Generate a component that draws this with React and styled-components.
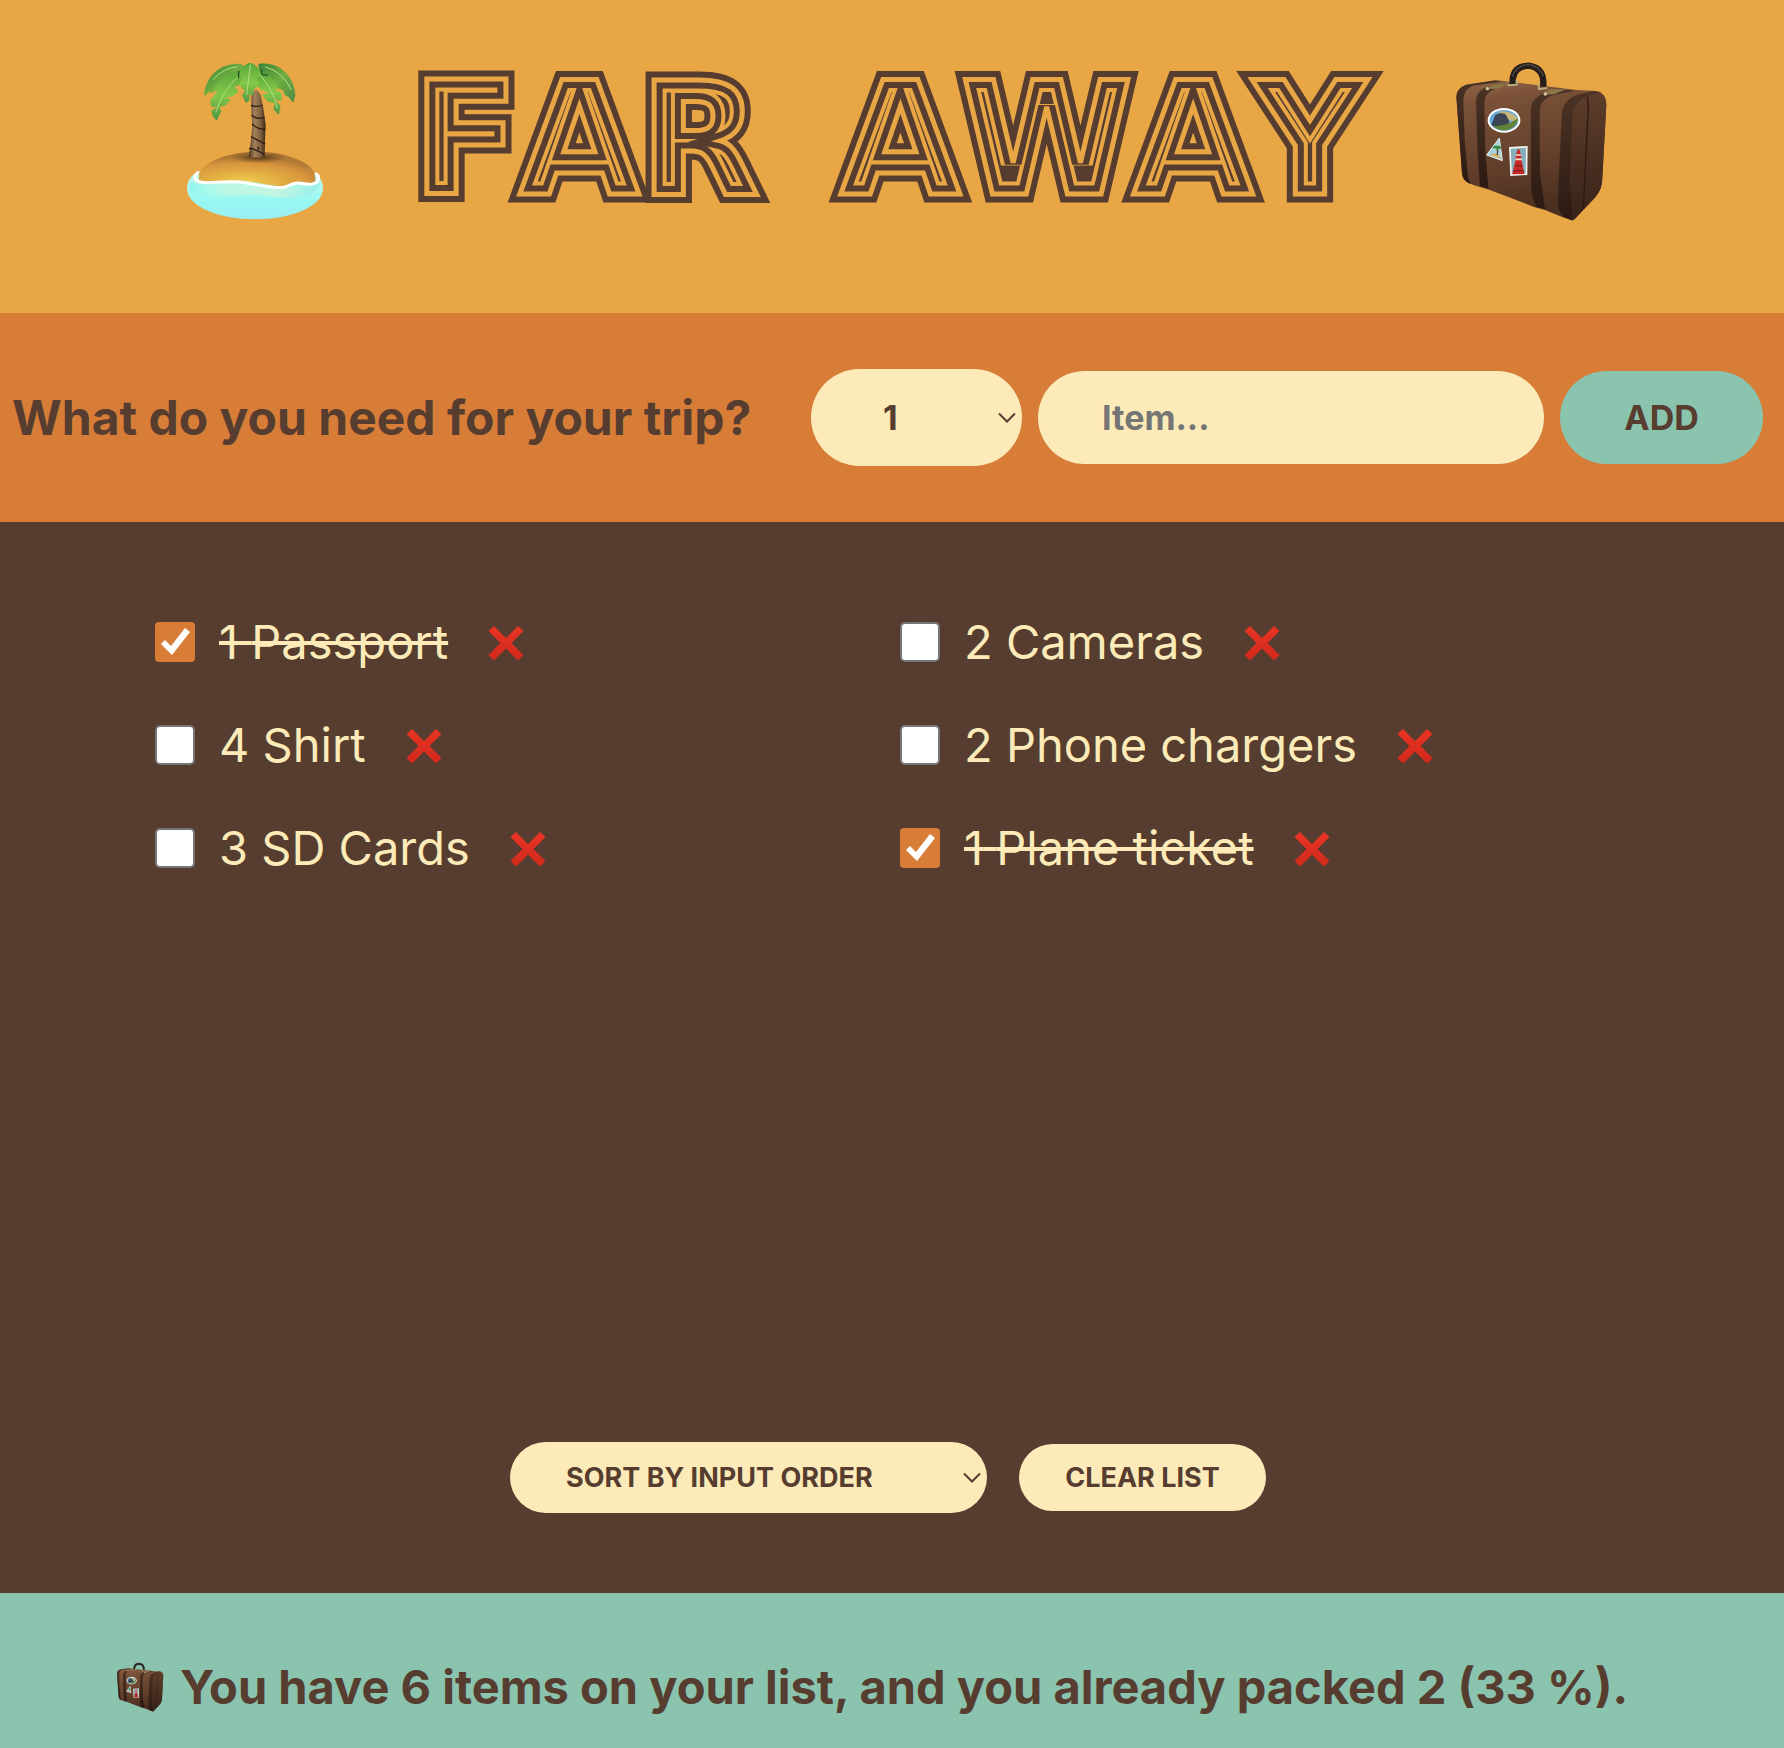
import React, { useState } from "react";
import styled, { createGlobalStyle } from "styled-components";

const color = {
  sun: "#e8a645",
  orange: "#d77d38",
  brown: "#563d2f",
  cream: "#fcebb8",
  mint: "#8ac4af",
};

const GlobalStyle = createGlobalStyle`
  * { box-sizing: border-box; margin: 0; padding: 0; }
  body, button, input, select {
    font-family: Inter, "Liberation Sans", sans-serif;
    color: ${color.brown};
  }
`;

const Page = styled.div`
  min-height: 100vh;
  display: grid;
  grid-template-rows: auto auto 1fr auto;
`;

const Header = styled.header`
  display: flex;
  align-items: flex-start;
  justify-content: space-between;
  padding: 60px 176px 91px 185px;
  background: ${color.sun};
`;

const Title = styled.h1`
  display: flex;
  gap: 80px;
  font-family: "DejaVu Sans", Inter, sans-serif;
  font-size: 156px;
  line-height: 160px;
  font-weight: 700;
  font-kerning: none;
  text-transform: uppercase;
  white-space: nowrap;
`;

const Word = styled.span`
  position: relative;
  color: ${color.brown};
  -webkit-text-stroke: 25px ${color.sun};

  &::before,
  &::after {
    content: "${(p) => p.children}";
    position: absolute;
    inset: 0;
    color: transparent;
  }
  &::before { -webkit-text-stroke: 17px ${color.brown}; }
  &::after { -webkit-text-stroke: 5px ${color.sun}; }
`;

const Form = styled.form`
  display: flex;
  align-items: center;
  gap: 16px;
  padding: 56px 21px 56px 12px;
  background: ${color.orange};
`;

const Question = styled.h2`
  flex: 1;
  font-size: 48px;
  line-height: 60px;
  font-weight: 700;
  white-space: nowrap;
`;

const SelectBox = styled.div`
  position: relative;
  width: ${(p) => p.$width}px;
`;

const Select = styled.select`
  appearance: none;
  display: block;
  width: 100%;
  height: ${(p) => (p.$small ? 71 : 97)}px;
  padding-left: ${(p) => (p.$small ? 56 : 72)}px;
  border: 0;
  border-radius: 50px;
  background: ${color.cream};
  font-size: ${(p) => (p.$small ? 27 : 34)}px;
  font-weight: 700;
  text-transform: uppercase;
`;

const Chevron = styled.svg`
  position: absolute;
  right: 6px;
  top: 50%;
  margin-top: -6px;
  pointer-events: none;
`;

const ItemInput = styled.input`
  width: 506px;
  height: 93px;
  padding: 0 64px;
  border: 0;
  border-radius: 50px;
  background: ${color.cream};
  font-size: 34px;
  font-weight: 700;
  &::placeholder { color: #757575; opacity: 1; }
`;

const Button = styled.button`
  height: ${(p) => (p.$small ? 67 : 93)}px;
  width: ${(p) => (p.$small ? 247 : 203)}px;
  border: 0;
  border-radius: 50px;
  background: ${(p) => (p.$small ? color.cream : color.mint)};
  font-size: ${(p) => (p.$small ? 27 : 34)}px;
  font-weight: 700;
  text-transform: uppercase;
  cursor: pointer;
`;

const Main = styled.main`
  display: flex;
  flex-direction: column;
  justify-content: space-between;
  padding: 90px 0 80px;
  background: ${color.brown};
`;

const List = styled.ul`
  display: grid;
  grid-template-columns: 1fr 1fr;
  gap: 43px 24px;
  padding: 0 163px 0 155px;
  list-style: none;
`;

const Item = styled.li`
  display: flex;
  align-items: center;
  height: 60px;
`;

const ItemLabel = styled.label`
  display: flex;
  align-items: center;
  gap: 24px;
  font-size: 47px;
  line-height: 60px;
  color: ${color.cream};
`;

const ItemText = styled.span`
  text-decoration: ${(p) => (p.$packed ? "line-through" : "none")};
`;

const Check = styled.input`
  appearance: none;
  width: 40px;
  height: 40px;
  border: 2px solid #767676;
  border-radius: 5px;
  background: #fff;
  &:checked { border: 0; border-radius: 4px; background: ${color.orange}; }
  &:checked::before {
    content: "";
    display: block;
    width: 40px;
    height: 40px;
    background: #fff;
    clip-path: polygon(6px 22px, 10px 18px, 16px 24px, 30px 6px, 35px 10px, 17px 33px);
  }
`;

const Remove = styled.button`
  display: flex;
  margin: 2px 0 0 40px;
  border: 0;
  background: none;
  cursor: pointer;
`;

const Actions = styled.div`
  display: flex;
  align-items: center;
  justify-content: center;
  gap: 32px;
  padding-right: 8px;
`;

const Stats = styled.footer`
  display: flex;
  align-items: center;
  justify-content: center;
  gap: 16px;
  padding: 64px 40px 31px 0;
  background: ${color.mint};
  font-size: 47px;
  line-height: 60px;
  font-weight: 700;
`;

function Arrow() {
  return (
    <Chevron width="18" height="12" viewBox="0 0 18 12" fill="none" stroke={color.brown} strokeWidth="2">
      <path d="M1 1.5 9 9.5 17 1.5" />
    </Chevron>
  );
}

function Cross() {
  return (
    <svg width="36" height="36" viewBox="0 0 36 36" aria-hidden="true">
      <defs>
        <linearGradient id="cross" x1="0" y1="0" x2="0" y2="1">
          <stop offset="0" stopColor="#e93424" />
          <stop offset="1" stopColor="#d1291c" />
        </linearGradient>
      </defs>
      <path fill="url(#cross)" d="M6 1 18 13 30 1 35.500 6 23.500 18 35.500 30 30 35.500 18 23.500 6 35.500 .5 30 12.500 18 .5 6Z" />
    </svg>
  );
}

function Island() {
  return (
    <svg width="140" height="162" viewBox="105 60 420 486" aria-hidden="true">
      <defs>
        <linearGradient id="sea" x1="0" y1="0" x2="0" y2="1">
          <stop offset="0" stopColor="#c8f6e4" />
          <stop offset=".6" stopColor="#98f8f2" />
          <stop offset="1" stopColor="#9aeef4" />
        </linearGradient>
        <linearGradient id="shallow" x1="0" y1="0" x2="1" y2="0">
          <stop offset="0" stopColor="#7df6f4" stopOpacity=".9" />
          <stop offset=".3" stopColor="#d8f8d8" stopOpacity=".6" />
          <stop offset=".65" stopColor="#e9f3cf" stopOpacity=".8" />
          <stop offset="1" stopColor="#7fe9ef" stopOpacity=".9" />
        </linearGradient>
        <radialGradient id="sand" cx=".38" cy=".9" r=".75">
          <stop offset="0" stopColor="#f0cf50" />
          <stop offset=".45" stopColor="#e2ac42" />
          <stop offset=".75" stopColor="#d8953e" />
          <stop offset="1" stopColor="#b07a35" />
        </radialGradient>
        <radialGradient id="shade">
          <stop offset="0" stopColor="#3f2a12" stopOpacity=".9" />
          <stop offset="1" stopColor="#6b4a20" stopOpacity="0" />
        </radialGradient>
        <linearGradient id="trunk" x1="0" y1="0" x2="1" y2="0">
          <stop offset="0" stopColor="#4b3220" />
          <stop offset=".35" stopColor="#a3805a" />
          <stop offset=".7" stopColor="#80603f" />
          <stop offset="1" stopColor="#3c2718" />
        </linearGradient>
        <linearGradient id="leafDark" x1="0" y1="0" x2="1" y2="1">
          <stop offset="0" stopColor="#3b8238" />
          <stop offset=".5" stopColor="#6fae40" />
          <stop offset="1" stopColor="#4d8a45" />
        </linearGradient>
        <linearGradient id="leafLight" x1="0" y1="0" x2="0" y2="1">
          <stop offset="0" stopColor="#59a53a" />
          <stop offset=".5" stopColor="#84c94a" />
          <stop offset="1" stopColor="#4f9544" />
        </linearGradient>
      </defs>
      <path d="M147 394C122 406 111 424 111 445 111 500 205 538 315 538S519 500 519 445C519 424 510 410 488 400Z" fill="url(#sea)" />
      <path d="M120 425C180 440 250 425 310 440 380 460 430 435 510 432 490 470 440 480 370 470 280 450 170 490 118 455Z" fill="url(#shallow)" opacity=".6" />
      <path d="M147 400C170 360 240 335 320 335S480 362 495 402L496 424C480 436 450 426 432 430 410 436 415 442 382 438 330 433 290 418 240 422 200 426 172 432 147 420Z" fill="url(#sand)" />
      <path d="M143 398C130 408 134 422 150 426 180 434 230 418 290 429 335 438 370 446 400 442 420 439 425 426 448 429 480 434 498 436 504 420 507 410 503 404 498 402" fill="none" stroke="#fff" strokeWidth="9" strokeLinecap="round" />
      <ellipse cx="325" cy="352" rx="90" ry="18" fill="url(#shade)" />
      <path d="M304 165Q316 135 332 165L340 205 347 255 345 300 344 351Q320 356 296 350L302 310 307 255 304 205Z" fill="url(#trunk)" />
      <path d="M303 196Q320 203 338 195M304 226Q322 240 344 232M306 251Q324 270 346 267M303 290Q322 300 346 312M297 325Q315 326 343 343M325 320V330" fill="none" stroke="#2d1c12" strokeWidth="4" />
      <path d="M275 72C210 66 166 110 162 169L178 156 188 158 204 138 216 142 240 122 256 124 290 100Z" fill="url(#leafDark)" />
      <path d="M325 72C390 62 432 110 436 165L430 188 416 172 406 166 398 150 382 144 362 126 330 112Z" fill="url(#leafDark)" />
      <path d="M275 90C225 100 196 130 190 154L202 154 180 182 184 202 202 200 184 212 188 228 200 242 214 214 208 202 228 196 244 178 226 174 250 168 266 154 254 142 280 128Z" fill="url(#leafLight)" />
      <path d="M318 92C355 98 380 125 388 146L372 146 394 158 395 182 376 180 392 198 386 224 370 208 374 190 352 184 336 164 356 158 330 148 316 128Z" fill="url(#leafLight)" />
      <path d="M300 68C275 75 266 95 265 116L276 112 268 136 284 152 276 166 288 190 299 180 298 162 308 168 312 148 328 136 322 112 334 104C330 85 315 72 300 68Z" fill="url(#leafLight)" />
      <path d="M302 74Q296 110 290 165M262 112Q220 150 198 215M330 105Q370 150 382 205M190 118Q220 84 262 80M345 80Q400 96 424 150" fill="none" stroke="#b4e084" strokeWidth="3" />
      <path d="M266 92 266 114M334 88 336 104 354 106" stroke="#234f26" strokeWidth="4" fill="none" />
    </svg>
  );
}

function Suitcase({ width, height, name }) {
  const id = (part) => `${name}-${part}`;
  const fill = (part) => `url(#${id(part)})`;
  return (
    <svg width={width} height={height} viewBox="72 60 462 486" aria-hidden="true">
      <defs>
        <linearGradient id={id("front")} x1="0" y1="0" x2=".2" y2="1">
          <stop offset="0" stopColor="#94694a" />
          <stop offset=".18" stopColor="#7a5138" />
          <stop offset=".6" stopColor="#65412c" />
          <stop offset="1" stopColor="#4a2e1f" />
        </linearGradient>
        <linearGradient id={id("side")} x1="0" y1="0" x2="0" y2="1">
          <stop offset="0" stopColor="#5e3e2b" />
          <stop offset="1" stopColor="#382219" />
        </linearGradient>
        <linearGradient id={id("strap")} x1="0" y1="0" x2="0" y2="1">
          <stop offset="0" stopColor="#4c3325" />
          <stop offset="1" stopColor="#2b1a12" />
        </linearGradient>
      </defs>
      <path d="M79 170Q80 145 108 134L205 121 440 150 500 153Q529 160 529 195L516 430Q510 460 488 480L432 540 395 530 345 510 310 500 180 450 130 435Q98 425 96 400Z" fill={fill("front")} />
      <path d="M424 225Q430 170 480 155L505 156Q529 163 529 195L516 430Q510 460 488 480L430 540 418 530Z" fill={fill("side")} />
      <path d="M472 165 475 200 460 505" stroke="#2b1a13" strokeWidth="4" fill="none" />
      <path d="M79 170Q80 145 108 134L195 121 215 125 130 137Q102 145 100 180L104 300 114 410 122 432Q98 425 96 400Z" fill={fill("strap")} />
      <path d="M138 180Q140 155 165 143L225 130 200 145Q164 155 163 190L166 330 175 445 150 438 143 340Z" fill={fill("strap")} />
      <path d="M302 205Q306 172 345 158L390 146 435 152 370 165Q330 178 329 215L330 400 345 508 318 500 304 460Z" fill={fill("strap")} />
      <path d="M396 215Q402 180 440 165L490 153 515 157Q440 168 428 220L420 420 428 542 400 532 384 505 386 420Z" fill={fill("strap")} />
      <path d="M166 148 190 134 236 130 204 146ZM338 164 358 148 410 148 372 163Z" fill="#8d7747" />
      <circle cx="172" cy="146" r="5" fill="#d5c9a0" />
      <circle cx="346" cy="162" r="5" fill="#d5c9a0" />
      <path d="M248 138V118Q252 78 295 77 338 82 340 125V140" fill="none" stroke="#251e1b" strokeWidth="19" />
      <path d="M247 110Q258 77 295 73 328 77 340 108" fill="none" stroke="#4b423c" strokeWidth="5" />
      <path d="M232 136 262 134M324 148 352 144M260 120V136M326 130V146" stroke="#b9aa7b" strokeWidth="6" />
      <ellipse cx="222" cy="241" rx="49" ry="37" fill="#fff" />
      <ellipse cx="222" cy="241" rx="43" ry="31" fill="#64a9d7" />
      <path d="M205 215Q235 210 262 232L264 245 230 240Z" fill="#c4b47d" />
      <path d="M184 254 196 224 212 219 226 222 238 244 232 262 200 264Z" fill="#3c4652" />
      <path d="M188 258Q225 262 264 235 262 262 232 271 205 274 188 258Z" fill="#638239" />
      <path d="M208 294 217 362 170 345Z" fill="#a7d3df" stroke="#e4eff0" strokeWidth="3" />
      <path d="M180 344Q200 334 215 357Z" fill="#dfad58" />
      <path d="M202 345 203 322" stroke="#5b4230" strokeWidth="4" />
      <path d="M186 326Q192 312 203 318 212 312 214 328 206 322 202 330 194 320 186 326Z" fill="#38893a" />
      <path d="M237 321 293 318 292 405 241 408Z" fill="#f4f2ed" />
      <path d="M242 326 288 323 287 400 246 403Z" fill="#87aebb" />
      <path d="M263 328 268 328 273 345 275 364 283 402 247 403 256 364 258 345Z" fill="#c92624" />
      <path d="M258 345H273M256 358H276" stroke="#f0dcd4" strokeWidth="5" />
      <path d="M254 378H278M250 392H281" stroke="#721f1e" strokeWidth="3" />
    </svg>
  );
}

const initialItems = [
  { id: 1, quantity: 1, name: "Passport", packed: true },
  { id: 2, quantity: 2, name: "Cameras", packed: false },
  { id: 3, quantity: 4, name: "Shirt", packed: false },
  { id: 4, quantity: 2, name: "Phone chargers", packed: false },
  { id: 5, quantity: 3, name: "SD Cards", packed: false },
  { id: 6, quantity: 1, name: "Plane ticket", packed: true },
];

export default function App() {
  const [items, setItems] = useState(initialItems);
  const [name, setName] = useState("");
  const [quantity, setQuantity] = useState(1);
  const [sortBy, setSortBy] = useState("input");

  const packed = items.filter((item) => item.packed).length;
  const percent = items.length ? Math.round((packed / items.length) * 100) : 0;
  const sorted = [...items].sort((a, b) => {
    if (sortBy === "name") return a.name.localeCompare(b.name);
    if (sortBy === "packed") return Number(a.packed) - Number(b.packed);
    return a.id - b.id;
  });

  function addItem(event) {
    event.preventDefault();
    if (!name) return;
    setItems([...items, { id: Date.now(), quantity, name, packed: false }]);
    setName("");
    setQuantity(1);
  }

  function toggle(id) {
    setItems(items.map((item) => (item.id === id ? { ...item, packed: !item.packed } : item)));
  }

  return (
    <>
      <GlobalStyle />
      <Page>
        <Header>
          <Island />
          <Title>
            <Word>Far</Word> <Word>Away</Word>
          </Title>
          <Suitcase width={154} height={162} name="large" />
        </Header>
        <Form onSubmit={addItem}>
          <Question>What do you need for your trip?</Question>
          <SelectBox $width={211}>
            <Select aria-label="Quantity" value={quantity} onChange={(e) => setQuantity(Number(e.target.value))}>
              {Array.from({ length: 20 }, (_, i) => (
                <option key={i} value={i + 1}>{i + 1}</option>
              ))}
            </Select>
            <Arrow />
          </SelectBox>
          <ItemInput aria-label="Item" placeholder="Item..." value={name} onChange={(e) => setName(e.target.value)} />
          <Button>Add</Button>
        </Form>
        <Main>
          <List>
            {sorted.map((item) => (
              <Item key={item.id}>
                <ItemLabel>
                  <Check type="checkbox" checked={item.packed} onChange={() => toggle(item.id)} />
                  <ItemText $packed={item.packed}>{item.quantity} {item.name}</ItemText>
                </ItemLabel>
                <Remove
                  type="button"
                  aria-label={`Remove ${item.name}`}
                  onClick={() => setItems(items.filter((other) => other.id !== item.id))}
                >
                  <Cross />
                </Remove>
              </Item>
            ))}
          </List>
          <Actions>
            <SelectBox $width={477}>
              <Select $small aria-label="Sort items" value={sortBy} onChange={(e) => setSortBy(e.target.value)}>
                <option value="input">Sort by input order</option>
                <option value="name">Sort by description</option>
                <option value="packed">Sort by packed status</option>
              </Select>
              <Arrow />
            </SelectBox>
            <Button $small type="button" onClick={() => setItems([])}>Clear list</Button>
          </Actions>
        </Main>
        <Stats>
          <Suitcase width={48} height={50} name="small" />
          <p>You have {items.length} items on your list, and you already packed {packed} ({percent} %).</p>
        </Stats>
      </Page>
    </>
  );
}
